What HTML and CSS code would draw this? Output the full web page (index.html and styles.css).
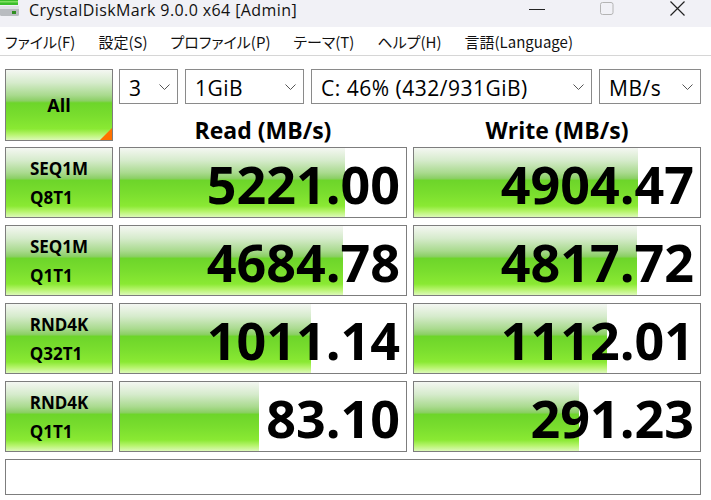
FILE: index.html
```html
<!DOCTYPE html>
<html lang="ja">
<head>
    <meta charset="UTF-8">
    <meta name="viewport" content="width=device-width, initial-scale=1.0">
    <title>CrystalDiskMark 9.0.0 x64 [Admin]</title>
    <link rel="stylesheet" href="styles.css">
</head>
<body>

<div class="titlebar">
    <svg class="app-icon" width="20" height="17" viewBox="0 0 20 17">
        <rect x="0" y="0" width="18" height="5" fill="#3cbf2a"/>
        <rect x="0" y="1" width="18" height="1.5" fill="#7fe060"/>
        <rect x="0" y="6" width="19" height="10" rx="1.5" fill="#b9bcc0"/>
        <rect x="0" y="6" width="19" height="3" fill="#dfe1e4"/>
        <rect x="12" y="11" width="4" height="3" fill="#2f8f20"/>
    </svg>
    <span class="title">CrystalDiskMark 9.0.0 x64 [Admin]</span>
    <div class="controls">
        <svg width="16" height="16" viewBox="0 0 16 16"><line x1="0" y1="9.5" x2="16" y2="9.5" stroke="#222" stroke-width="1"/></svg>
        <svg width="14" height="14" viewBox="0 0 14 14"><rect x="0.5" y="1.5" width="12.5" height="12" rx="2" fill="none" stroke="#b4b4b4" stroke-width="1"/></svg>
        <svg width="15" height="15" viewBox="0 0 15 15"><path d="M0.5 0.5 L14.5 14.5 M14.5 0.5 L0.5 14.5" stroke="#222" stroke-width="1.2"/></svg>
    </div>
</div>

<nav class="menubar">
    <span>ファイル(F)</span>
    <span>設定(S)</span>
    <span>プロファイル(P)</span>
    <span>テーマ(T)</span>
    <span>ヘルプ(H)</span>
    <span>言語(Language)</span>
</nav>

<main class="panel">
    <div class="top">
        <div class="cell all">All</div>
        <div class="selects">
            <div class="select s-count">3<svg class="chev" width="11" height="6" viewBox="0 0 11 6"><polyline points="0.5,0.5 5.5,5.5 10.5,0.5" fill="none" stroke="#555" stroke-width="1"/></svg></div>
            <div class="select s-size">1GiB<svg class="chev" width="11" height="6" viewBox="0 0 11 6"><polyline points="0.5,0.5 5.5,5.5 10.5,0.5" fill="none" stroke="#555" stroke-width="1"/></svg></div>
            <div class="select s-drive">C: 46% (432/931GiB)<svg class="chev" width="11" height="6" viewBox="0 0 11 6"><polyline points="0.5,0.5 5.5,5.5 10.5,0.5" fill="none" stroke="#555" stroke-width="1"/></svg></div>
            <div class="select s-unit">MB/s<svg class="chev" width="11" height="6" viewBox="0 0 11 6"><polyline points="0.5,0.5 5.5,5.5 10.5,0.5" fill="none" stroke="#555" stroke-width="1"/></svg></div>
        </div>
        <div class="head">Read (MB/s)</div>
        <div class="head">Write (MB/s)</div>
    </div>

    <div class="rows">
        <div class="row">
            <div class="cell label">SEQ1M<br>Q8T1</div>
            <div class="cell meter" style="background-size: 225px 100%">5221.00</div>
            <div class="cell meter" style="background-size: 224px 100%">4904.47</div>
        </div>
        <div class="row">
            <div class="cell label">SEQ1M<br>Q1T1</div>
            <div class="cell meter" style="background-size: 223px 100%">4684.78</div>
            <div class="cell meter" style="background-size: 223px 100%">4817.72</div>
        </div>
        <div class="row">
            <div class="cell label">RND4K<br>Q32T1</div>
            <div class="cell meter" style="background-size: 191px 100%">1011.14</div>
            <div class="cell meter" style="background-size: 193px 100%">1112.01</div>
        </div>
        <div class="row">
            <div class="cell label">RND4K<br>Q1T1</div>
            <div class="cell meter" style="background-size: 139px 100%">83.10</div>
            <div class="cell meter" style="background-size: 165px 100%">291.23</div>
        </div>
    </div>

    <div class="comment"></div>
</main>

</body>
</html>
```

FILE: styles.css
```css
body {
    margin: 0;
    width: 711px;
    height: 500px;
    overflow: hidden;
    background-color: #fff;
    font-family: "Open Sans", "Noto Sans CJK JP", sans-serif;
    color: #000;
}
.titlebar {
    height: 27px;
    display: flex;
    align-items: flex-start;
    background-color: #f1f1f6;
}
.title {
    margin-left: 9px;
    font-family: "Open Sans", sans-serif;
    font-size: 16px;
    letter-spacing: 0.4px;
    line-height: 20px;
    color: #111;
}
.controls {
    margin-left: auto;
    margin-right: 26px;
    display: flex;
    align-items: flex-start;
}
.controls svg:nth-child(1) {
    margin-right: 55px;
}
.controls svg:nth-child(2) {
    margin-top: 1px;
    margin-right: 56px;
}
.controls svg:nth-child(3) {
    margin-top: 1px;
}
.menubar {
    height: 28px;
    display: flex;
    align-items: center;
    gap: 23px;
    padding-left: 5px;
    border-bottom: 1px solid #d6d6d6;
    font-family: "Noto Sans CJK JP", sans-serif;
    font-feature-settings: "palt";
    font-size: 15px;
    color: #111;
}
.panel {
    padding: 13px 10px 0 5px;
}
.top {
    display: grid;
    grid-template-columns: 108px 288px 288px;
    grid-template-rows: 35px 37px;
    column-gap: 6px;
}
.cell {
    box-sizing: border-box;
    border: 1px solid #7d7d7d;
}
.label, .all {
    display: flex;
    flex-direction: column;
    align-items: center;
    justify-content: center;
    font-weight: 700;
    background: linear-gradient(to bottom, #f4f7f2 0%, #d6ebcc 18%, #a9da8e 36%, #8ccf66 44%, #6dd52a 47%, #7ade2e 66%, #8ae933 84%, #b6f46c 92%, #dcf9b8 100%);
}
.all {
    grid-row: 1 / 3;
    font-size: 18px;
    position: relative;
}
.all::after {
    content: "";
    position: absolute;
    right: 0;
    bottom: 0;
    border-style: solid;
    border-width: 0 0 12px 12px;
    border-color: transparent transparent #ff7200 transparent;
}
.selects {
    grid-column: 2 / 4;
    display: flex;
    gap: 7px;
}
.select {
    box-sizing: border-box;
    height: 35px;
    border: 1px solid #8a8a8a;
    display: flex;
    align-items: center;
    justify-content: space-between;
    padding: 3px 7px 0 9px;
    font-size: 21px;
    letter-spacing: 0.5px;
}
.select .chev {
    margin-bottom: 2px;
}
.s-count { width: 59px; }
.s-size { width: 119px; }
.s-drive { width: 281px; }
.s-unit { width: 102px; }
.head {
    text-align: center;
    font-weight: 700;
    font-size: 23px;
    line-height: 26px;
    padding-top: 13px;
}
.rows {
    margin-top: 6px;
    display: grid;
    row-gap: 7px;
}
.row {
    display: grid;
    grid-template-columns: 108px 288px 288px;
    column-gap: 6px;
    height: 71px;
}
.label {
    font-size: 17px;
    line-height: 29px;
}
.meter {
    text-align: right;
    padding: 2px 6px 0 0;
    font-weight: 700;
    font-size: 52px;
    line-height: 67px;
    background-color: #fff;
    background-image: linear-gradient(to bottom, #f4f7f2 0%, #d6ebcc 18%, #a9da8e 36%, #8ccf66 44%, #6dd52a 47%, #7ade2e 66%, #8ae933 84%, #b6f46c 92%, #dcf9b8 100%);
    background-repeat: no-repeat;
}
.comment {
    box-sizing: border-box;
    margin-top: 7px;
    width: 696px;
    height: 36px;
    border: 1px solid #7d7d7d;
}
```
